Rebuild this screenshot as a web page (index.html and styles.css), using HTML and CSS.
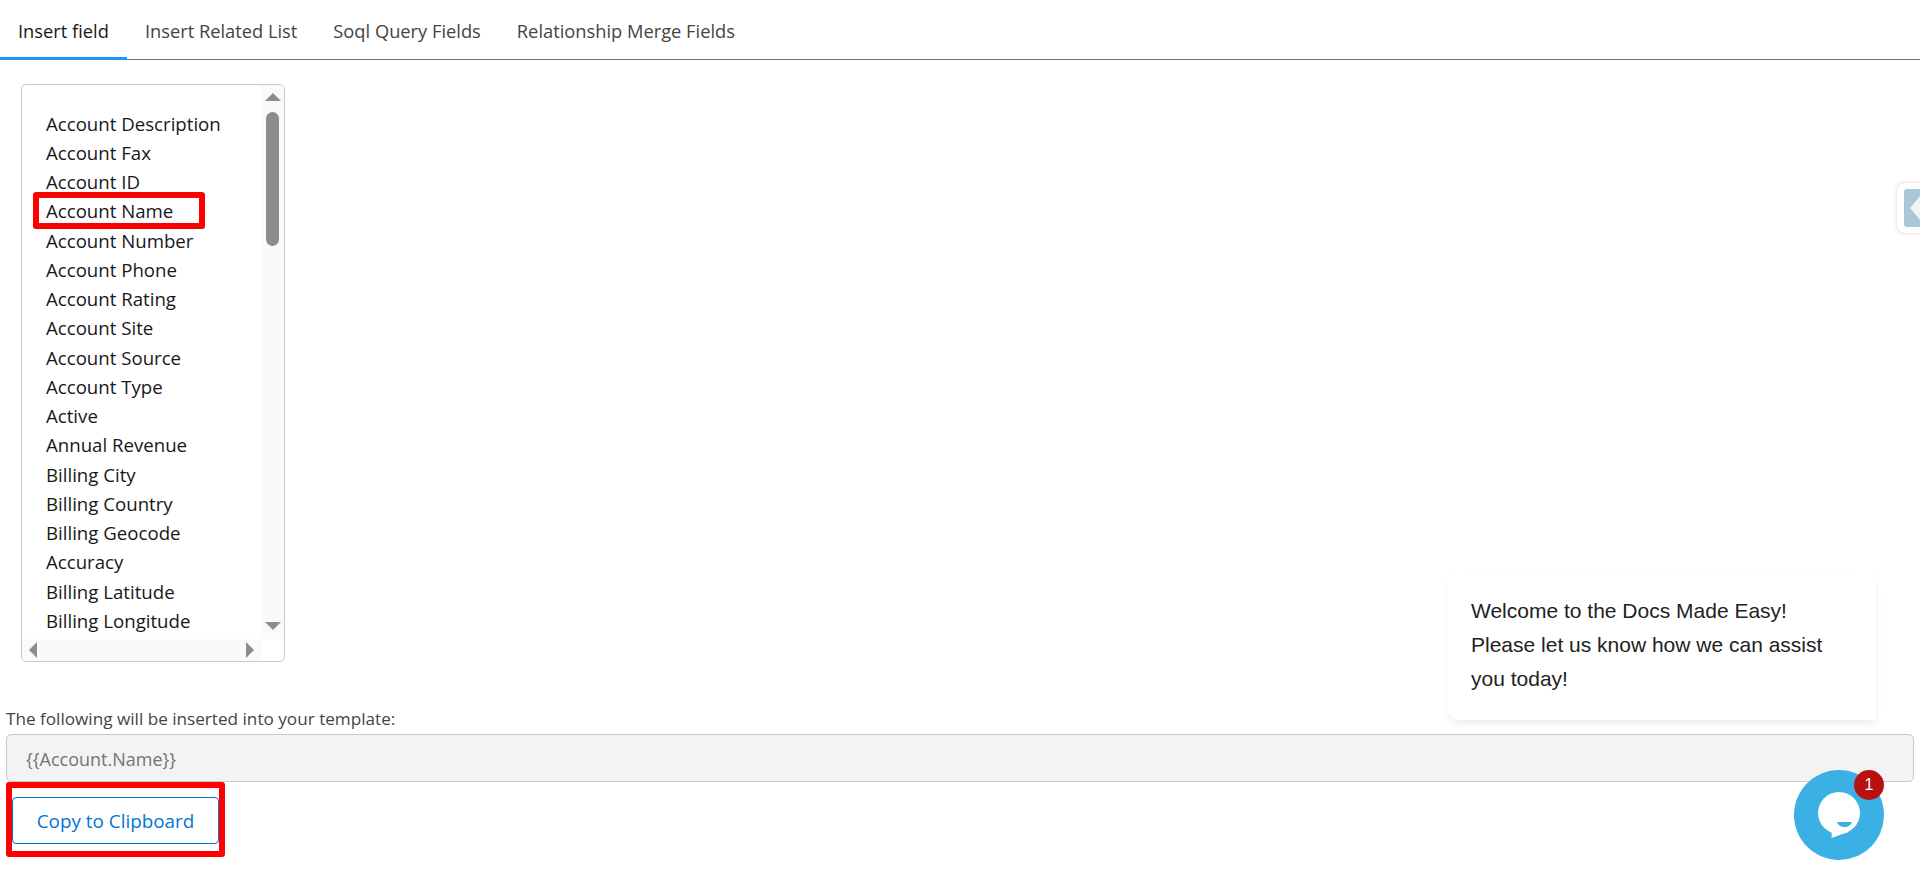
FILE: index.html
```html
<!DOCTYPE html>
<html lang="en">
<head>
<meta charset="utf-8">
<title>Insert field</title>
<link rel="stylesheet" href="styles.css">
</head>
<body>
<nav class="tabs">
  <a class="tab active">Insert field</a>
  <a class="tab">Insert Related List</a>
  <a class="tab">Soql Query Fields</a>
  <a class="tab">Relationship Merge Fields</a>
</nav>
<div class="listbox">
  <ul class="items">
    <li>Account Description</li>
    <li>Account Fax</li>
    <li>Account ID</li>
    <li>Account Name</li>
    <li>Account Number</li>
    <li>Account Phone</li>
    <li>Account Rating</li>
    <li>Account Site</li>
    <li>Account Source</li>
    <li>Account Type</li>
    <li>Active</li>
    <li>Annual Revenue</li>
    <li>Billing City</li>
    <li>Billing Country</li>
    <li>Billing Geocode</li>
    <li>Accuracy</li>
    <li>Billing Latitude</li>
    <li>Billing Longitude</li>
  </ul>
  <div class="vbar"><span class="arrow up"></span><span class="thumb"></span><span class="arrow down"></span></div>
  <div class="hbar"><span class="arrow left"></span><span class="arrow right"></span></div>
  <span class="mark"></span>
</div>
<p class="hint">The following will be inserted into your template:</p>
<div class="merge">{{Account.Name}}</div>
<div class="redbox"><button class="copy" type="button">Copy to Clipboard</button></div>

<div class="handle"><div class="handle-inner"><span class="handle-arrow"></span></div></div>
<div class="popover">Welcome to the Docs Made Easy!<br>Please let us know how we can assist you today!</div>
<div class="chat">
  <svg class="chat-icon" width="90" height="90" viewBox="0 0 90 90">
    <circle cx="45" cy="43" r="21" fill="#fff"/>
    <path d="M38 58L37.500 68L54 62z" fill="#fff"/>
    <path d="M43 52h15c-1 3-4 5-7.500 5s-6.500-2-7.500-5z" fill="#3bb0e4"/>
  </svg>
  <span class="badge">1</span>
</div>
</body>
</html>
```
FILE: styles.css
```css
* { box-sizing: border-box; }
html, body { margin: 0; padding: 0; height: 890px; overflow: hidden; background: #fff; }
body { font-family: "Open Sans", "Noto Sans", sans-serif; color: #181818; position: relative; }

.tabs { display: flex; height: 60px; border-bottom: 1px solid #747474; font-size: 18.300px; }
.tab { height: 60px; padding: 0 18px; line-height: 62px; color: #444; }
.tab.active { color: #181818; border-bottom: 3px solid #1b96ff; }

.listbox { position: relative; width: 264px; height: 578px; margin: 24px 0 0 21px; border: 1px solid #c9c9c9; border-radius: 5px; overflow: hidden; font-size: 18.650px; }
.items { list-style: none; margin: 0; padding: 23.500px 0 0 24px; line-height: 29.250px; height: 553px; overflow: hidden; }
.vbar { position: absolute; right: 0; top: 0; width: 23px; height: 554px; background: #fafafa; }
.hbar { position: absolute; left: 0; bottom: 0; width: 239px; height: 22px; background: #fafafa; }
.thumb { position: absolute; left: 5px; top: 27px; width: 13px; height: 134px; border-radius: 7px; background: #8c8c8c; }
.arrow { position: absolute; width: 0; height: 0; border-style: solid; border-color: transparent; }
.up { left: 3.500px; top: 8px; border-width: 0 8px 8px; border-bottom-color: #8c8c8c; }
.down { left: 3.500px; top: 537px; border-width: 8px 8px 0; border-top-color: #8c8c8c; }
.left { left: 7px; top: 3px; border-width: 8px 8px 8px 0; border-right-color: #8c8c8c; }
.right { left: 224px; top: 3px; border-width: 8px 0 8px 8px; border-left-color: #8c8c8c; }
.mark { position: absolute; left: 11px; top: 107px; width: 172px; height: 37px; border: 6px solid #f00; border-radius: 3px; }

.hint { margin: 47px 0 0 6px; font-size: 17.150px; line-height: 20px; color: #444; height: 25px; }
.merge { width: 1908px; height: 48px; margin-left: 6px; padding-left: 19px; line-height: 48px; font-size: 18px; color: #747474; background: #f3f3f3; border: 1px solid #c9c9c9; border-radius: 5px; }
.redbox { width: 219px; height: 75px; margin-left: 6px; padding: 9px 0 0; border: 6px solid #f00; border-radius: 3px; }
.copy { display: block; width: 207px; height: 47px; padding: 0; background: #fff; border: 1px solid #0176d3; border-radius: 4px; color: #0176d3; font: inherit; font-size: 18.850px; }

.handle { position: absolute; right: 0; top: 183px; width: 23px; height: 50px; padding: 6px 0 0 7px; background: #fff; border-radius: 8px 0 0 8px; box-shadow: 0 0 4px rgba(0,0,0,.18); }
.handle-inner { position: relative; height: 38px; background: #a9c8d6; border-radius: 3px 0 0 3px; }
.handle-arrow { position: absolute; left: 6px; top: 7px; border-style: solid; border-width: 12px 10px 12px 0; border-color: transparent #eef4f7 transparent transparent; }

.popover { position: absolute; left: 1447px; top: 570px; width: 429px; height: 150px; padding: 24px 50px 0 24px; background: #fff; border-radius: 12px 12px 0 12px; box-shadow: 0 4px 8px -2px rgba(0,0,0,.1); font-family: "Liberation Sans", Arial, sans-serif; font-size: 21px; line-height: 34px; color: #222; }
.chat { position: absolute; left: 1794px; top: 770px; width: 90px; height: 90px; border-radius: 50%; background: #3bb0e4; }
.chat-icon { display: block; }
.badge { position: absolute; right: 0; top: 0; width: 30px; height: 30px; border-radius: 50%; background: #b91010; color: #fff; font-family: "Liberation Sans", Arial, sans-serif; font-size: 16px; line-height: 30px; text-align: center; }
```
